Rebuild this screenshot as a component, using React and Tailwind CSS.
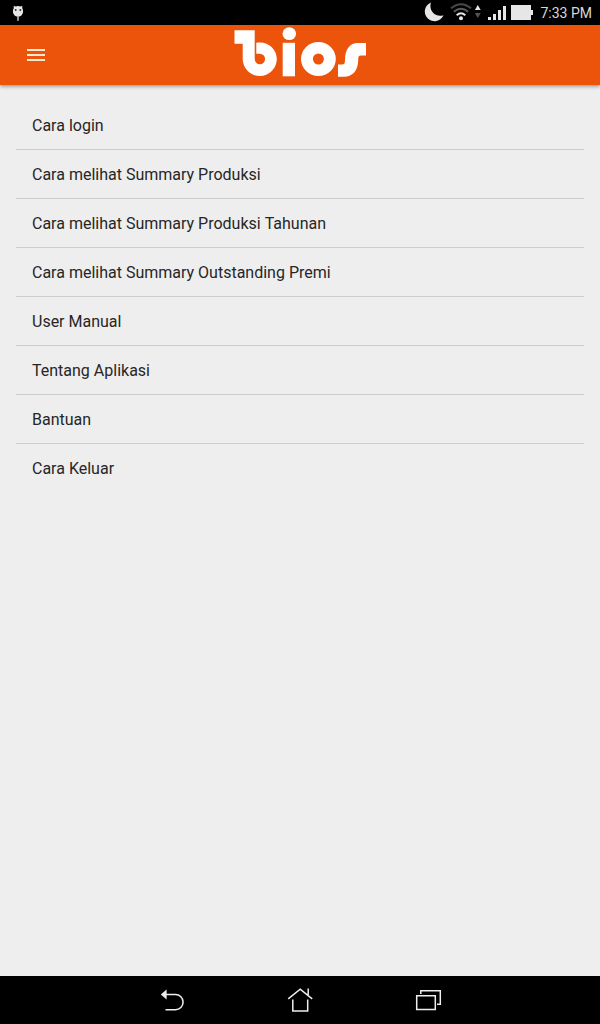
const items = [
  'Cara login',
  'Cara melihat Summary Produksi',
  'Cara melihat Summary Produksi Tahunan',
  'Cara melihat Summary Outstanding Premi',
  'User Manual',
  'Tentang Aplikasi',
  'Bantuan',
  'Cara Keluar',
];

function StatusBar() {
  return (
    <div className="flex h-[25px] shrink-0 items-center justify-between bg-black pr-2 pl-3">
      <svg width="12" height="25" viewBox="12 0 12 25">
        <path d="M13.8 5.8 L15.4 6.4 Q18 5.6 20.6 6.4 L22.2 5.8 L22.3 8.3 C23.6 10.5 23.3 13.5 21.8 15 C20 17 16 17 14.2 15 C12.7 13.5 12.4 10.5 13.7 8.3 Z" fill="#e6e6e6" />
        <path d="M17.2 16h1.6v4.7h-1.6z" fill="#bdbdbd" />
        <circle cx="15.7" cy="10" r="1" fill="#333" />
        <circle cx="20.3" cy="10" r="1" fill="#333" />
      </svg>
      <div className="flex items-center">
        <svg width="110" height="25" viewBox="424 0 110 25">
          <path d="M431 2.5 A9.7 9.7 0 1 0 443.5 15.2 C436 18 428.2 11 431 2.5 Z" fill="#e6e6e6" />
          <g fill="none" strokeWidth="2">
            <path d="M451 8.3 Q461 0.2 471 8.3" stroke="#484848" />
            <path d="M453.8 11.8 Q461 5.8 468.2 11.8" stroke="#5a5a5a" />
            <path d="M456.7 15.3 Q461 11.2 465.3 15.3" stroke="#e6e6e6" />
          </g>
          <circle cx="461" cy="18.2" r="2" fill="#e6e6e6" />
          <path d="M477.8 5 L480.7 10 H474.9 Z" fill="#e6e6e6" />
          <path d="M477.8 18 L480.7 13 H474.9 Z" fill="#555" />
          <path d="M488 17h3v3h-3z M493 14h3v6h-3z M498 10h3v10h-3z M503 6h3v14h-3z M511 5h20v5h2v5h-2v5h-20z" fill="#e6e6e6" />
        </svg>
        <span className="ml-[6px] w-[52px] pt-px text-right text-[14px] leading-6 whitespace-nowrap text-[#d8d8d8]">7:33 PM</span>
      </div>
    </div>
  );
}

function Logo() {
  return (
    <svg width="140" height="60" viewBox="230 25 140 60" role="img" aria-label="bios">
      <g fill="#fff">
        <path
          fillRule="evenodd"
          d="M234.5 30.3 H254.7 V59 A5.2 5.2 0 1 0 259.9 53.8 H256.3 V42.8 C267 40.5 276.8 48.5 276.8 59 A17 17 0 0 1 242.7 59 V43.7 H234.5 Z"
        />
        <ellipse cx="289.3" cy="33.7" rx="6.8" ry="6.4" />
        <path d="M282.7 42.8h12.3v33.5h-12.3z" />
        <path fillRule="evenodd" d="M301 59a17.4 17.1 0 1 0 34.8 0a17.4 17.1 0 1 0 -34.8 0z M312.9 59a5.5 5.5 0 1 1 11 0a5.5 5.5 0 1 1 -11 0z" />
        <path d="M366 43 V55.6 H361 C358.5 55.6 358.2 57 358.2 60 C358.2 70 353 76.8 344 76.8 H338 V64.5 H342 C344.5 64.5 345 63.2 345 60 C345 49 350 43 358 43 Z" />
      </g>
    </svg>
  );
}

function Header() {
  return (
    <header className="z-10 grid h-[60px] shrink-0 grid-cols-[1fr_auto_1fr] items-center bg-[#ec540c] shadow-[0_1px_4px_rgba(0,0,0,0.45)]">
      <button aria-label="Menu" className="ml-[27px] flex w-[18px] flex-col gap-[3px]">
        <span className="h-[2px] bg-[#ffe9d2]" />
        <span className="h-[2px] bg-[#ffe9d2]" />
        <span className="h-[2px] bg-[#ffe9d2]" />
      </button>
      <Logo />
    </header>
  );
}

function NavBar() {
  return (
    <nav className="flex h-12 shrink-0 items-center justify-center gap-[100px] bg-black">
      <svg width="28" height="48" viewBox="158 976 28 48" fill="none" stroke="#eee" strokeWidth="1.5">
        <path d="M166 994.5 H175.5 A7.6 7.6 0 0 1 175.5 1009.7 H165.5" />
        <path d="M160.8 994.5 L166.6 989.5 V999.6 Z" fill="#eee" stroke="none" />
      </svg>
      <svg width="28" height="48" viewBox="286 976 28 48" fill="none" stroke="#eee" strokeWidth="1.5">
        <path d="M288.2 998.8 L300.2 989.2 L312.2 998.8 M308.2 995 V988.5 M292.8 999.5 V1011 H307.7 V999.5" />
      </svg>
      <svg width="28" height="48" viewBox="414 976 28 48" fill="none" stroke="#eee" strokeWidth="1.5">
        <path d="M416.7 995.7 H435.3 V1009.4 H416.7 Z M420.8 994 V990.7 H440.3 V1004.3 H437" />
      </svg>
    </nav>
  );
}

// Each word is its own inline block, so no kerning is applied across spaces.
function Label({ text }) {
  return (
    <span>
      {text.split(' ').map((word, i) => (
        <span key={i}>
          {i > 0 && ' '}
          <span className="inline-block">{word}</span>
        </span>
      ))}
    </span>
  );
}

export default function App() {
  return (
    <div className="flex h-[1024px] w-[600px] flex-col bg-[#eeeeee] font-['Roboto',sans-serif]">
      <StatusBar />
      <Header />
      <main className="flex-1 p-4">
        <ul className="divide-y divide-[#cdcdcd]">
          {items.map((item) => (
            <li key={item} className="flex h-[49px] items-center px-4 pt-[2px] text-base text-[#262626] last:h-12">
              <Label text={item} />
            </li>
          ))}
        </ul>
      </main>
      <NavBar />
    </div>
  );
}
